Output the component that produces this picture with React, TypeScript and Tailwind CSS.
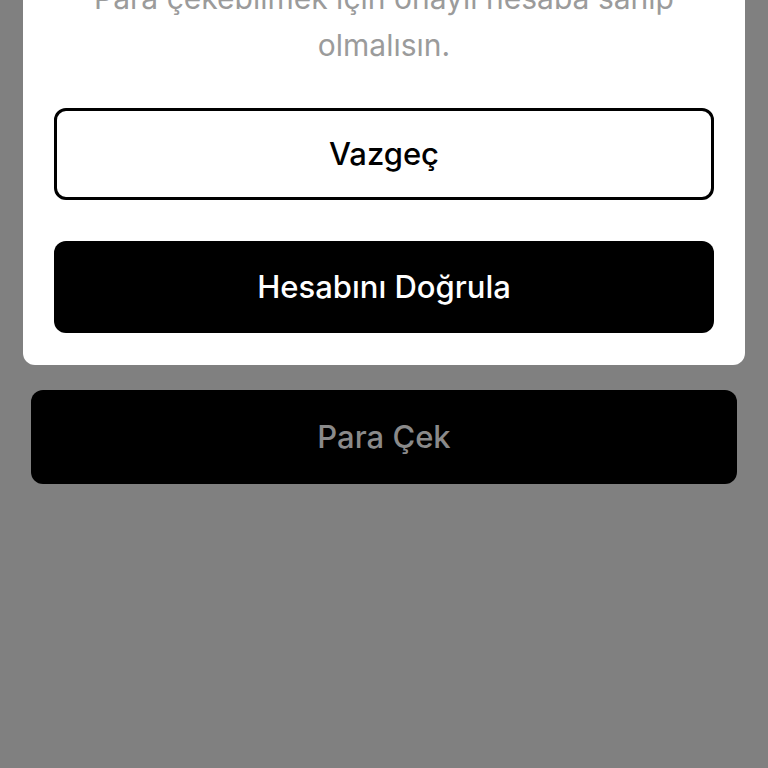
export default function App() {
  return (
    <div
      className="min-h-screen w-full bg-[#808080] overflow-hidden"
      style={{ fontFamily: 'Inter, "Noto Sans", sans-serif' }}
    >
      {/* Dialog sheet */}
      <div className="mx-[23px] -mt-[25px] flex flex-col rounded-b-[12px] bg-white px-[31px] pb-[32px]">
        <p className="mx-auto max-w-[610px] text-center text-[30px] leading-[47px] text-[#9b9b9b]">
          Para çekebilmek için onaylı hesaba sahip olmalısın.
        </p>

        <button className="mt-[39px] flex h-[92px] items-center justify-center rounded-[12px] border-[3px] border-black bg-white text-[31px] font-medium text-black">
          Vazgeç
        </button>

        <button className="mt-[41px] flex h-[92px] items-center justify-center rounded-[12px] bg-black text-[31px] font-medium text-white">
          Hesabını Doğrula
        </button>
      </div>

      <div className="mx-[31px] mt-[25px]">
        <button className="flex h-[94px] w-full items-center justify-center rounded-[12px] bg-black text-[31px] font-medium text-[#8a8a8a]">
          Para Çek
        </button>
      </div>
    </div>
  );
}
